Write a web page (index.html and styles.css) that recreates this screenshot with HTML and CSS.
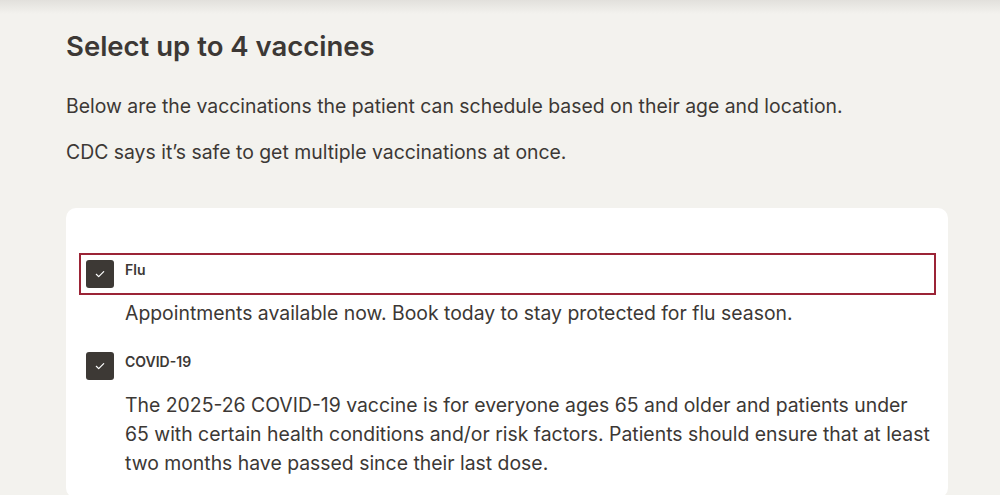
FILE: index.html
```html
<!DOCTYPE html>
<html lang="en">
<head>
<meta charset="utf-8">
<title>Select vaccines</title>
<link rel="stylesheet" href="styles.css">
</head>
<body>
<div class="topshade"></div>
<main class="page">
  <h1 class="title">Select up to 4 vaccines</h1>
  <p class="lead">Below are the vaccinations the patient can schedule based on their age and location.</p>
  <p class="lead">CDC says it’s safe to get multiple vaccinations at once.</p>
  <section class="card">
    <div class="option">
      <label class="row focused">
        <span class="box"><svg viewBox="0 0 12 12" width="12" height="12"><path d="M2.3 6.3 L4.7 8.6 L9.7 3.6" fill="none" stroke="#fff" stroke-width="1.2" stroke-linecap="round" stroke-linejoin="round"/></svg></span>
        <span class="name">Flu</span>
      </label>
      <p class="desc">Appointments available now. Book today to stay protected for flu season.</p>
    </div>
    <div class="option">
      <label class="row">
        <span class="box"><svg viewBox="0 0 12 12" width="12" height="12"><path d="M2.3 6.3 L4.7 8.6 L9.7 3.6" fill="none" stroke="#fff" stroke-width="1.2" stroke-linecap="round" stroke-linejoin="round"/></svg></span>
        <span class="name">COVID-19</span>
      </label>
      <p class="desc">The 2025-26 COVID-19 vaccine is for everyone ages 65 and older and patients under 65 with certain health conditions and/or risk factors. Patients should ensure that at least two months have passed since their last dose.</p>
    </div>
  </section>
</main>
</body>
</html>
```
FILE: styles.css
```css
html, body {
  margin: 0;
  padding: 0;
  background: #f3f2ee;
  color: #3c3835;
  font-family: Inter, "Noto Sans", sans-serif;
  overflow: hidden;
}
.topshade {
  position: absolute;
  top: 0;
  left: 0;
  right: 0;
  height: 14px;
  background: linear-gradient(#e2e0dc, rgba(243,242,238,0));
  pointer-events: none;
}
.page {
  padding: 28px 52px 0 66px;
}
.title {
  margin: 0;
  font-size: 27.5px;
  line-height: 36px;
  font-weight: 600;
}
.lead {
  margin: 0;
  font-size: 19.4px;
  line-height: 29px;
}
.title + .lead {
  margin-top: 27.5px;
}
.lead + .lead {
  margin-top: 17.5px;
}
.card {
  margin-top: 41px;
  background: #fff;
  border-radius: 10px;
  padding: 52px 19px 20px 20px;
}
.option + .option {
  margin-top: 24.5px;
}
.row {
  display: flex;
  align-items: flex-start;
  gap: 11px;
}
.row.focused {
  outline: 2px solid #9b2436;
  outline-offset: 5px;
}
.box {
  width: 28px;
  height: 28px;
  border-radius: 3px;
  background: #3d3935;
  display: flex;
  align-items: center;
  justify-content: center;
  flex: none;
}
.name {
  font-size: 14px;
  line-height: 20px;
  font-weight: 600;
  margin-top: 0;
}
.desc {
  margin: 10.5px -3px 0 39px;
  font-size: 19.4px;
  line-height: 29px;
}
```
